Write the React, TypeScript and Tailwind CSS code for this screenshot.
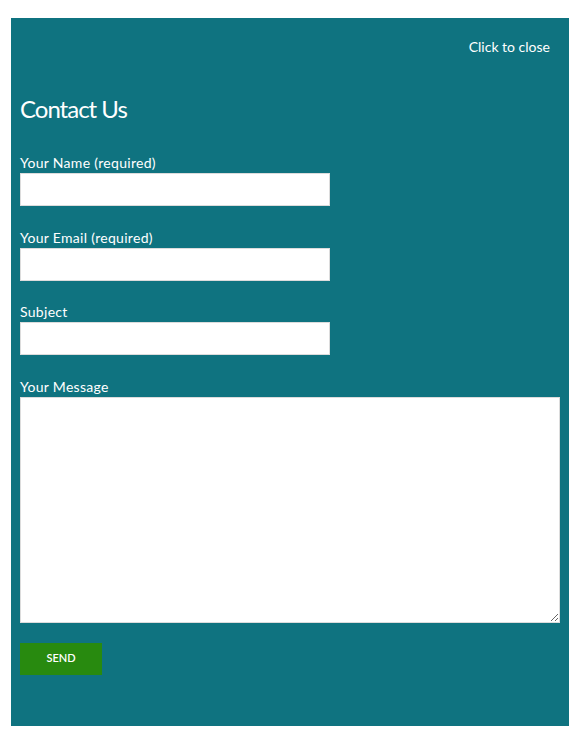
import React from 'react';

const inputCls = "block w-[310px] h-[33px] bg-white border border-[#dcdcdc] px-2 text-sm text-gray-800 outline-none";

function Field({ label, id }: { label: string; id: string }) {
    return (
        <div className="mb-[21.5px]">
            <label htmlFor={id} className="block text-[14px] leading-[20px] tracking-[0.3px] text-white">{label}</label>
            <input id={id} name={id} type="text" className={inputCls} />
        </div>
    );
}

export default function App() {
    return (
        <div className="min-h-[743px] bg-white pt-[18px] pl-[11px] font-['Lato','Liberation_Sans',sans-serif]">
            <div className="w-[558px] h-[708px] bg-[#0f7380] pt-[19px] px-[9px]">
                <div className="text-right pr-[10px] text-[14px] leading-[20px] text-white cursor-pointer">Click to close</div>
                <h2 className="mt-[37px] mb-[30px] text-[24px] leading-[29px] tracking-[-1px] text-white font-normal">Contact Us</h2>
                <form>
                    <Field label="Your Name (required)" id="your_name" />
                    <Field label="Your Email (required)" id="your_email" />
                    <Field label="Subject" id="subject" />
                    <div>
                        <label htmlFor="message" className="block text-[14px] leading-[20px] tracking-[0.3px] text-white">Your Message</label>
                        <textarea id="message" name="message" className="block w-[540px] h-[226px] bg-white border border-[#dcdcdc] p-2 text-sm text-gray-800 outline-none"></textarea>
                    </div>
                    <button type="submit" className="mt-[20px] w-[82px] h-[32px] bg-[#288a0f] text-white text-[11px] font-semibold uppercase">Send</button>
                </form>
            </div>
        </div>
    );
}
